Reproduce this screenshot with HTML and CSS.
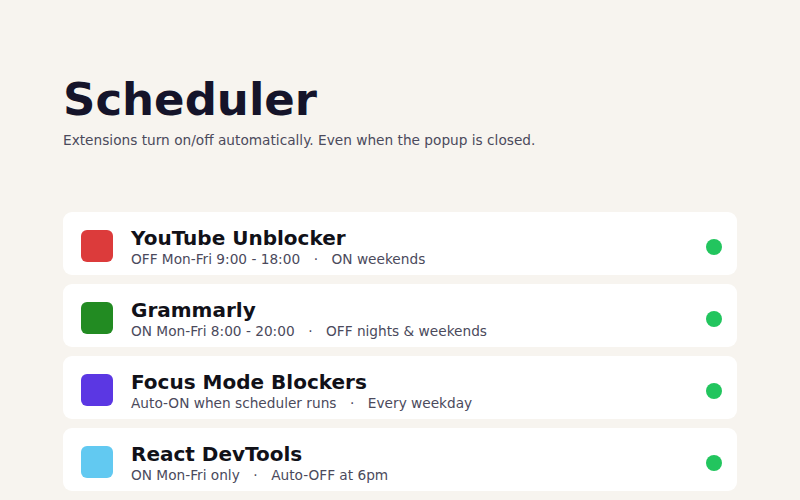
FILE: index.html
```html
<!DOCTYPE html>
<html lang="en">
<head>
<meta charset="utf-8">
<title>Scheduler</title>
<link rel="stylesheet" href="styles.css">
</head>
<body>
<main class="page">
  <header class="head">
    <h1 class="title">Scheduler</h1>
    <p class="lead">Extensions turn on/off automatically. Even when the popup is closed.</p>
  </header>

  <ul class="list">
    <li class="card">
      <span class="swatch swatch-red"></span>
      <div class="info">
        <div class="name">YouTube Unblocker</div>
        <div class="rule">OFF Mon-Fri 9:00 - 18:00<span class="sep">·</span>ON weekends</div>
      </div>
      <span class="dot"></span>
    </li>
    <li class="card">
      <span class="swatch swatch-green"></span>
      <div class="info">
        <div class="name">Grammarly</div>
        <div class="rule">ON Mon-Fri 8:00 - 20:00<span class="sep">·</span>OFF nights &amp; weekends</div>
      </div>
      <span class="dot"></span>
    </li>
    <li class="card">
      <span class="swatch swatch-purple"></span>
      <div class="info">
        <div class="name">Focus Mode Blockers</div>
        <div class="rule">Auto-ON when scheduler runs<span class="sep">·</span>Every weekday</div>
      </div>
      <span class="dot"></span>
    </li>
    <li class="card">
      <span class="swatch swatch-blue"></span>
      <div class="info">
        <div class="name">React DevTools</div>
        <div class="rule">ON Mon-Fri only<span class="sep">·</span>Auto-OFF at 6pm</div>
      </div>
      <span class="dot"></span>
    </li>
  </ul>
</main>
</body>
</html>
```

FILE: styles.css
```css
html, body {
  margin: 0;
  padding: 0;
  background: #f7f4ef;
  font-family: "DejaVu Sans", "Liberation Sans", sans-serif;
}

.page {
  padding: 72px 63px 0;
}

.head {
  margin-bottom: 62px;
}

.title {
  margin: 0;
  font-size: 45px;
  font-weight: bold;
  line-height: 56px;
  color: #15142a;
}

.lead {
  margin: 2px 0 0;
  font-size: 13.7px;
  line-height: 20px;
  color: #4b4a5c;
}

.list {
  list-style: none;
  margin: 0;
  padding: 0;
  display: flex;
  flex-direction: column;
  gap: 9px;
}

.card {
  display: flex;
  align-items: center;
  gap: 18px;
  background: #ffffff;
  border-radius: 9px;
  padding: 15px 15px 8px 18px;
}

.swatch {
  flex: none;
  width: 32px;
  height: 32px;
  border-radius: 6px;
  margin-top: -2px;
}

.swatch-red { background: #dc3b3b; }
.swatch-green { background: #228b22; }
.swatch-purple { background: #5b37e3; }
.swatch-blue { background: #62c9f1; }

.info {
  flex: 1;
  min-width: 0;
}

.name {
  font-size: 20px;
  font-weight: bold;
  line-height: 22px;
  color: #111118;
}

.rule {
  margin-top: 3px;
  font-size: 13.7px;
  line-height: 15px;
  color: #4b4a5c;
}

.sep {
  margin: 0 13.5px;
}

.dot {
  flex: none;
  width: 16px;
  height: 16px;
  border-radius: 50%;
  background: #22c55e;
}
```
